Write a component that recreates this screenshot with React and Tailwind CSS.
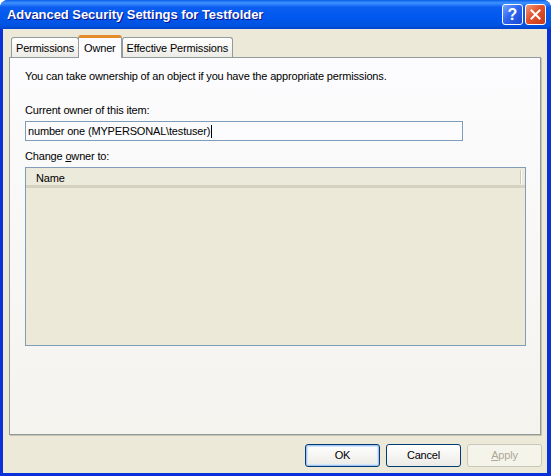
import React from 'react';

const font = { fontFamily: '"Liberation Sans", Arial, sans-serif' };

const TitleButton = ({ kind }) => (
  <div
    className={`w-[21px] h-[21px] rounded-[3px] border border-white flex items-center justify-center ${
      kind === 'close'
        ? 'bg-[linear-gradient(135deg,#f29a7a_0%,#e2522c_45%,#c43a1a_100%)]'
        : 'bg-[linear-gradient(135deg,#79a5ff_0%,#2f66f2_45%,#1b47d1_100%)]'
    }`}
  >
    {kind === 'close' ? (
      <svg width="11" height="11" viewBox="0 0 11 11">
        <path d="M1.5 1.5 L9.5 9.5 M9.5 1.5 L1.5 9.5" stroke="white" strokeWidth="2" strokeLinecap="square" />
      </svg>
    ) : (
      <span className="text-white font-bold text-[16px] leading-none mt-[1px]">?</span>
    )}
  </div>
);

const Tab = ({ label, selected, className = '' }) =>
  selected ? (
    <div className={`relative h-[23px] px-[5px] pt-[2px] bg-[#fcfcfe] border-x border-[#919b9c] border-t-[3px] border-t-[#e68b2c] rounded-t-[3px] -mb-[1px] z-10 ${className}`}>
      {label}
    </div>
  ) : (
    <div className={`h-[20px] mt-[3px] px-[4px] pt-[2px] bg-[linear-gradient(#ffffff,#ecebe6)] border border-b-0 border-[#919b9c] rounded-t-[3px] ${className}`}>
      {label}
    </div>
  );

const Button = ({ children, primary, disabled }) => (
  <div
    className={`w-[75px] h-[23px] rounded-[3px] border flex items-center justify-center ${
      disabled
        ? 'border-[#c9c7ba] bg-[#f5f4ea] text-[#aca899]'
        : primary
        ? 'border-[#003c74] bg-[linear-gradient(#ffffff,#ecebe6)] text-black shadow-[inset_0_0_0_1px_#a9c2ef,inset_0_0_0_2px_#cee7ff]'
        : 'border-[#003c74] bg-[linear-gradient(#ffffff,#ecebe6)] text-black'
    }`}
  >
    {children}
  </div>
);

export default function App() {
  return (
    <div style={font} className="w-[551px] h-[476px] flex flex-col bg-[#0831d9] rounded-t-[8px] overflow-hidden">
      {/* title bar */}
      <div className="h-[29px] shrink-0 flex items-center pl-[7px] pr-[5px] bg-[linear-gradient(#0a5fe8_0%,#3e92ff_10%,#0b5df0_25%,#0058ee_60%,#0052e0_88%,#0042cc_100%)]">
        <span className="flex-1 text-white font-bold text-[13px] tracking-[-0.05px] [text-shadow:1px_1px_0_#0f1089]">
          Advanced Security Settings for Testfolder
        </span>
        <div className="flex gap-[2px]">
          <TitleButton kind="help" />
          <TitleButton kind="close" />
        </div>
      </div>

      {/* client area */}
      <div className="flex-1 ml-[3px] mr-[4px] mb-[3px] bg-[#ece9d8] flex flex-col px-[6px] pt-[5px] text-[11px] tracking-[-0.17px] text-black">
        <div className="flex items-end pl-[2px]">
          <Tab label="Permissions" />
          <Tab label="Owner" selected className="-ml-[1px]" />
          <Tab label="Effective Permissions" />
        </div>

        <div className="h-[378px] border border-[#919b9c] shadow-[1px_1px_0_#c5c2b2] bg-[linear-gradient(#fcfcfe,#f4f3ee)] px-[15px] pt-[12px]">
          <p className="leading-[13px]">You can take ownership of an object if you have the appropriate permissions.</p>

          <p className="mt-[21px] leading-[13px]">Current owner of this item:</p>
          <div className="mt-[4px] w-[438px] h-[20px] border border-[#7f9db9] bg-[#fcfcfe] flex items-center px-[2px]">
            <span>number one (MYPERSONAL\testuser)</span>
            <span className="w-[1px] h-[13px] bg-black ml-[1px]" />
          </div>

          <p className="mt-[9px] leading-[13px]">
            Change <span className="underline">o</span>wner to:
          </p>
          <div className="mt-[4px] w-[501px] h-[179px] border border-[#7f9db9] bg-[#ece9d8] flex flex-col">
            <div className="h-[20px] flex bg-[#ebeadb] border-b-[3px] border-[#d6d2c2]">
              <div className="w-[495px] pl-[10px] pt-[4px] leading-[13px]">Name</div>
              <div className="w-[1px] h-[14px] mt-[2px] bg-[#fcfcfa] shadow-[-1px_0_0_#cbc7b8]" />
            </div>
          </div>
        </div>

        <div className="flex justify-end gap-[6px] mt-[9px] -mr-[1px]">
          <Button primary>OK</Button>
          <Button>Cancel</Button>
          <Button disabled>
            <span><span className="underline">A</span>pply</span>
          </Button>
        </div>
      </div>
    </div>
  );
}
